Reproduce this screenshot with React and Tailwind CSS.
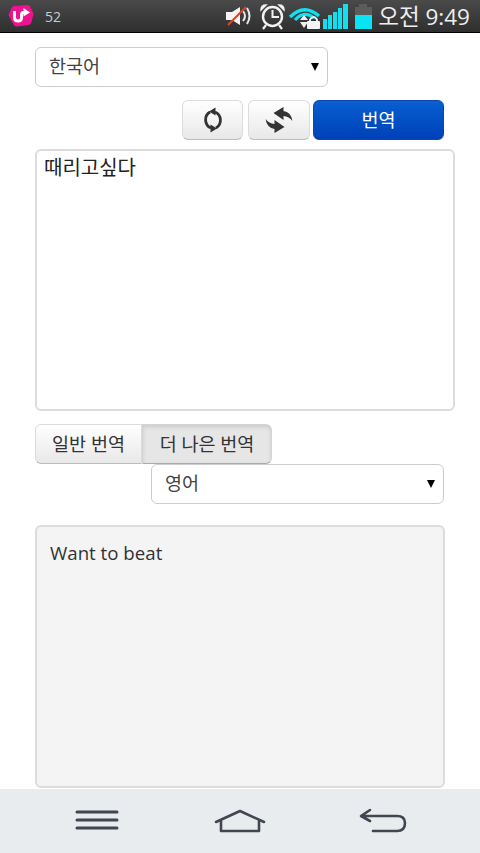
const KR = "font-['Open_Sans','Noto_Sans_CJK_KR',sans-serif]";

const LgLogo = () => (
    <svg width="26" height="22" viewBox="0 0 26 22">
        <path d="M6 1 L19.5 0 Q21.5 0 22.5 2 L25.5 9 L23.5 17 Q23 19.5 20.5 20 L9 21.5 Q6.5 21.5 5.5 19.5 L0.5 10 L3.5 3 Q4.5 1 6 1 Z" fill="#ee1290" />
        <path d="M6.5 6 V12.5 Q6.5 16 10 16 Q13.5 16 13.5 12.5 V9.5 Q13.5 7.5 15.5 7.5 H18" fill="none" stroke="#fff" strokeWidth="3" />
        <path d="M15.5 3 L22 7.5 L15.5 11.5 Z" fill="#fff" />
    </svg>
);

const StatusIcons = () => (
    <svg width="148" height="33" viewBox="0 0 148 33">
        {/* muted speaker */}
        <path d="M2 12 H8 L16 7 V25 L8 20 H2 Z" fill="#f4f4f4" />
        <path d="M19 11 Q23 16 19 21 M23 8 Q28 16 23 24" fill="none" stroke="#e8e8e8" strokeWidth="2" />
        <path d="M4 25 L22 7" stroke="#e8401c" strokeWidth="2.2" />
        {/* alarm clock */}
        <circle cx="48.5" cy="16.5" r="9.5" fill="none" stroke="#f2f2f2" strokeWidth="2.4" />
        <path d="M48.5 10 V17 H55" fill="none" stroke="#f2f2f2" strokeWidth="2" />
        <path d="M37 10 Q37 5 42 5 Z M60 10 Q60 5 55 5 Z" fill="#f2f2f2" stroke="#f2f2f2" strokeWidth="1.5" />
        <path d="M42 25 L39 29 M55 25 L58 29" fill="none" stroke="#f2f2f2" strokeWidth="2.2" />
        {/* wifi with lock */}
        <path d="M66 17 Q80 3 95 16" fill="none" stroke="#10e0f0" strokeWidth="3.2" />
        <path d="M71 20 Q80 10 90 18" fill="none" stroke="#10e0f0" strokeWidth="3.2" />
        <path d="M76 20 L80 15 L84 20 Z M76 22 H84 L80 28 Z" fill="#f0f0f0" />
        <rect x="83" y="21" width="13" height="8" rx="1" fill="#f4f4f4" />
        <path d="M86 21 V19.5 Q89.5 14.5 93 19.5 V21" fill="none" stroke="#f4f4f4" strokeWidth="1.8" />
        {/* signal bars */}
        <rect x="99" y="19" width="4" height="10" fill="#10e0f0" />
        <rect x="104" y="15" width="4" height="14" fill="#10e0f0" />
        <rect x="109" y="12" width="4" height="17" fill="#10e0f0" />
        <rect x="114" y="8" width="4" height="21" fill="#10e0f0" />
        <rect x="119" y="4" width="5" height="25" fill="#10e0f0" />
        {/* battery */}
        <rect x="135" y="4" width="8" height="3" fill="#5c5c5c" />
        <rect x="131" y="7" width="17" height="8" fill="#5c5c5c" />
        <rect x="131" y="15" width="17" height="14" fill="#08e4f4" />
    </svg>
);

const RefreshIcon = () => (
    <svg width="22" height="26" viewBox="0 0 22 26">
        <path d="M8 5 A9 9 0 0 0 9 21" fill="none" stroke="#333" strokeWidth="2.8" />
        <path d="M13 5 A9 9 0 0 1 14 21" fill="none" stroke="#333" strokeWidth="2.8" />
        <path d="M7 4.5 L13.5 0.5 V8.5 Z" fill="#333" />
        <path d="M15 21.5 L8.5 17.5 V25.5 Z" fill="#333" />
    </svg>
);

const SwapIcon = () => (
    <svg width="32" height="30" viewBox="0 0 32 30">
        <path d="M10.5 8 L20.5 2 V6 Q28 7 29.5 16 Q26 11.5 20.5 11 V15 Z" fill="#333" />
        <path d="M10.5 8 L20.5 2 V6 Q28 7 29.5 16 Q26 11.5 20.5 11 V15 Z" fill="#333" transform="rotate(180 16 15)" />
    </svg>
);

const SelectBox = ({ label, className }) => (
    <div className={`flex items-center justify-between h-10 bg-white border border-[#ccc] rounded-md pl-[13px] pr-[8px] text-[18.5px] text-[#444] ${className}`}>
        <span className="-mt-[2px]">{label}</span>
        <span className="w-0 h-0 border-x-[4px] border-x-transparent border-t-[8px] border-t-black" />
    </div>
);

const IconButton = ({ className, children }) => (
    <button type="button" className={`flex items-center justify-center h-10 rounded-md border border-[#dcdcdc] border-b-[#bbb] bg-gradient-to-b from-white to-[#e8e8e8] ${className}`}>
        {children}
    </button>
);

const App = () => {
    return (
        <div className={`relative flex flex-col w-[480px] h-[853px] overflow-hidden bg-white ${KR}`}>
            <div className="flex items-center justify-between h-[33px] shrink-0 bg-gradient-to-b from-[#4a4a4a] to-[#2f2f2f] border-b border-black pl-[8px] pr-[10px]">
                <div className="flex items-center gap-[11px]">
                    <LgLogo />
                    <span className="text-[14px] text-[#ccc]">52</span>
                </div>
                <div className="flex items-center gap-[6px]">
                    <StatusIcons />
                    <span className="text-[22.5px] leading-none text-[#eee] whitespace-nowrap pt-[2px]">오전 9:49</span>
                </div>
            </div>

            <div className="flex flex-col grow pl-[35px]">
                <SelectBox label="한국어" className="w-[293px] mt-[14px]" />

                <div className="flex mt-[13px] ml-[147px] gap-[5px]">
                    <IconButton className="w-[61px]"><RefreshIcon /></IconButton>
                    <IconButton className="w-[62px] -mr-[2px]"><SwapIcon /></IconButton>
                    <button type="button" className="h-10 w-[131px] rounded-md bg-gradient-to-b from-[#0a5fd0] to-[#0040b8] border border-[#0a46b0] text-white text-[18.5px]">번역</button>
                </div>

                <div className="w-[420px] h-[262px] mt-[9px] border-2 border-[#dcdcdc] rounded-md px-[7px] py-[2px] text-[20px] text-[#222]">때리고싶다</div>

                <div className="flex w-[237px] h-10 mt-[13px] text-[18.5px] text-[#333]">
                    <div className="flex items-center justify-center w-[107px] rounded-l-md border border-[#dcdcdc] border-b-[#bbb] bg-gradient-to-b from-white to-[#e8e8e8]">일반 번역</div>
                    <div className="flex items-center justify-center grow rounded-r-md border border-[#d4d4d4] border-b-[#aaa] bg-[#e6e6e6] shadow-[inset_0_2px_4px_rgba(0,0,0,0.12)]">더 나은 번역</div>
                </div>

                <SelectBox label="영어" className="w-[293px] ml-[116px]" />

                <div className="w-[410px] h-[263px] mt-[21px] border-2 border-[#dcdcdc] rounded-md bg-[#f4f4f4] px-[13px] py-[12px] text-[18.7px] text-[#333]">Want to beat</div>
            </div>

            <div className="flex items-center h-[64px] shrink-0 bg-[#e9ecef]">
                <div className="flex justify-center w-[194px]">
                    <svg width="44" height="24" viewBox="0 0 44 24">
                        <path d="M2 3 H42 M2 11 H42 M2 19 H42" stroke="#414650" strokeWidth="3" strokeLinecap="round" />
                    </svg>
                </div>
                <div className="flex justify-center w-[92px]">
                    <svg width="52" height="24" viewBox="0 0 52 24">
                        <path d="M2 13 L26 2 L50 13 M7 12 V22 H45 V12" fill="none" stroke="#414650" strokeWidth="2.6" strokeLinejoin="round" strokeLinecap="round" />
                    </svg>
                </div>
                <div className="flex justify-center w-[194px]">
                    <svg width="48" height="26" viewBox="0 0 48 26">
                        <path d="M11 2 L2 8 L11 13 M3 8 H38 Q46 8 46 15 Q46 23 38 23 H14" fill="none" stroke="#414650" strokeWidth="2.6" strokeLinecap="round" strokeLinejoin="round" />
                    </svg>
                </div>
            </div>
        </div>
    );
};

export default App;
